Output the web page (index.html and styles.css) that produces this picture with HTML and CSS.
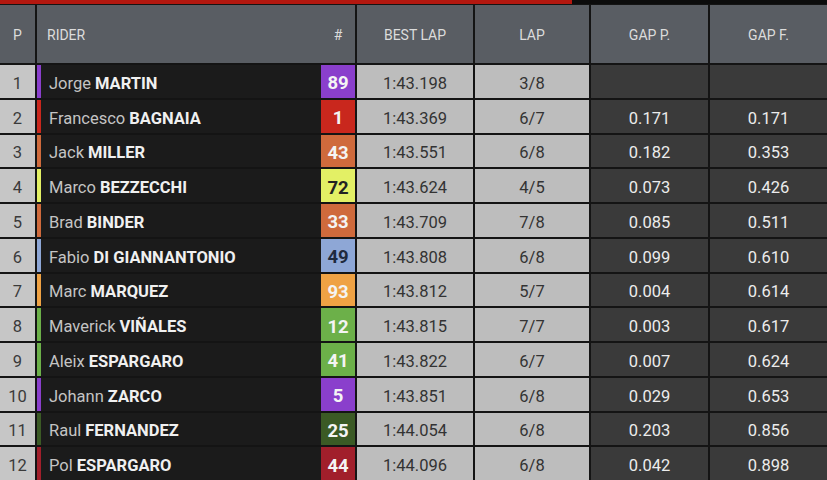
FILE: index.html
```html
<!DOCTYPE html>
<html>
<head>
<meta charset="utf-8">
<link rel="stylesheet" href="styles.css">
</head>
<body>
<div class="topbar"><div class="progress"></div></div>
<div class="table">
  <div class="hd hd-p">P</div>
  <div class="hd hd-rider"><span>RIDER</span><span class="hash">#</span></div>
  <div class="hd">BEST LAP</div>
  <div class="hd">LAP</div>
  <div class="hd">GAP P.</div>
  <div class="hd">GAP F.</div>

  <div class="pos">1</div>
  <div class="rider c-purple"><span class="stripe"></span><span class="name">Jorge <b>MARTIN</b></span><span class="num">89</span></div>
  <div class="lt">1:43.198</div><div class="lt">3/8</div><div class="dk"></div><div class="dk"></div>

  <div class="pos">2</div>
  <div class="rider c-red"><span class="stripe"></span><span class="name">Francesco <b>BAGNAIA</b></span><span class="num">1</span></div>
  <div class="lt">1:43.369</div><div class="lt">6/7</div><div class="dk">0.171</div><div class="dk">0.171</div>

  <div class="pos">3</div>
  <div class="rider c-orange"><span class="stripe"></span><span class="name">Jack <b>MILLER</b></span><span class="num">43</span></div>
  <div class="lt">1:43.551</div><div class="lt">6/8</div><div class="dk">0.182</div><div class="dk">0.353</div>

  <div class="pos">4</div>
  <div class="rider c-lime"><span class="stripe"></span><span class="name">Marco <b>BEZZECCHI</b></span><span class="num">72</span></div>
  <div class="lt">1:43.624</div><div class="lt">4/5</div><div class="dk">0.073</div><div class="dk">0.426</div>

  <div class="pos">5</div>
  <div class="rider c-orange"><span class="stripe"></span><span class="name">Brad <b>BINDER</b></span><span class="num">33</span></div>
  <div class="lt">1:43.709</div><div class="lt">7/8</div><div class="dk">0.085</div><div class="dk">0.511</div>

  <div class="pos">6</div>
  <div class="rider c-blue"><span class="stripe"></span><span class="name">Fabio <b>DI GIANNANTONIO</b></span><span class="num">49</span></div>
  <div class="lt">1:43.808</div><div class="lt">6/8</div><div class="dk">0.099</div><div class="dk">0.610</div>

  <div class="pos">7</div>
  <div class="rider c-amber"><span class="stripe"></span><span class="name">Marc <b>MARQUEZ</b></span><span class="num">93</span></div>
  <div class="lt">1:43.812</div><div class="lt">5/7</div><div class="dk">0.004</div><div class="dk">0.614</div>

  <div class="pos">8</div>
  <div class="rider c-green"><span class="stripe"></span><span class="name">Maverick <b>VIÑALES</b></span><span class="num">12</span></div>
  <div class="lt">1:43.815</div><div class="lt">7/7</div><div class="dk">0.003</div><div class="dk">0.617</div>

  <div class="pos">9</div>
  <div class="rider c-green"><span class="stripe"></span><span class="name">Aleix <b>ESPARGARO</b></span><span class="num">41</span></div>
  <div class="lt">1:43.822</div><div class="lt">6/7</div><div class="dk">0.007</div><div class="dk">0.624</div>

  <div class="pos">10</div>
  <div class="rider c-purple"><span class="stripe"></span><span class="name">Johann <b>ZARCO</b></span><span class="num">5</span></div>
  <div class="lt">1:43.851</div><div class="lt">6/8</div><div class="dk">0.029</div><div class="dk">0.653</div>

  <div class="pos">11</div>
  <div class="rider c-dkgreen"><span class="stripe"></span><span class="name">Raul <b>FERNANDEZ</b></span><span class="num">25</span></div>
  <div class="lt">1:44.054</div><div class="lt">6/8</div><div class="dk">0.203</div><div class="dk">0.856</div>

  <div class="pos">12</div>
  <div class="rider c-dkred"><span class="stripe"></span><span class="name">Pol <b>ESPARGARO</b></span><span class="num">44</span></div>
  <div class="lt">1:44.096</div><div class="lt">6/8</div><div class="dk">0.042</div><div class="dk">0.898</div>
</div>
</body>
</html>
```

FILE: styles.css
```css
* { box-sizing: border-box; }
html, body { margin: 0; padding: 0; }
body {
  width: 827px;
  height: 480px;
  overflow: hidden;
  background: #141414;
  font-family: Roboto, "Liberation Sans", sans-serif;
}
.topbar {
  height: 5px;
  background: #0c0c0c;
  border-bottom: 1px solid #141414;
}
.progress {
  width: 572px;
  height: 4px;
  background: #b3170f;
}
.table {
  display: grid;
  grid-template-columns: 35px 318px 116px 114px 117px 117px;
  grid-template-rows: 58px repeat(12, 1fr);
  gap: 2px;
  height: 475px;
  background: #141414;
}
.hd {
  background: #595d63;
  color: #dcdcdc;
  font-size: 14px;
  display: flex;
  align-items: center;
  justify-content: center;
  padding-top: 2px;
}
.hd-rider {
  justify-content: space-between;
  padding-left: 10px;
}
.hash {
  width: 34px;
  text-align: center;
}
.pos, .lt, .dk, .name, .num {
  padding-top: 4px;
}
.pos {
  background: #c6c6c6;
  color: #3a3a3a;
  font-size: 16.5px;
  display: flex;
  align-items: center;
  justify-content: center;
}
.rider {
  display: flex;
  background: #1b1b1b;
}
.stripe {
  width: 4px;
  flex: none;
}
.name {
  flex: 1;
  display: flex;
  align-items: center;
  gap: 4px;
  padding-left: 8px;
  color: #c4c4c4;
  font-size: 16.5px;
}
.name b {
  color: #f0f0f0;
  font-weight: 700;
}
.num {
  width: 34px;
  flex: none;
  display: flex;
  align-items: center;
  justify-content: center;
  color: #f4f4f4;
  font-weight: 700;
  font-size: 18.5px;
}
.lt {
  background: #bdbdbd;
  color: #333;
  font-size: 16.5px;
  display: flex;
  align-items: center;
  justify-content: center;
}
.dk {
  background: #3a3a3a;
  color: #ececec;
  font-size: 16.5px;
  display: flex;
  align-items: center;
  justify-content: center;
}
.c-purple .stripe, .c-purple .num { background: #8a3fcc; }
.c-red .stripe, .c-red .num { background: #c9271d; }
.c-orange .stripe, .c-orange .num { background: #cf6a3c; }
.c-lime .stripe, .c-lime .num { background: #e3f065; }
.c-lime .num { color: #222; }
.c-blue .stripe, .c-blue .num { background: #8ea7d6; }
.c-blue .num { color: #1f2a3d; }
.c-amber .stripe, .c-amber .num { background: #efa244; }
.c-green .stripe, .c-green .num { background: #6cb049; }
.c-dkgreen .stripe, .c-dkgreen .num { background: #3b5a25; }
.c-dkred .stripe, .c-dkred .num { background: #a11f2b; }
```
